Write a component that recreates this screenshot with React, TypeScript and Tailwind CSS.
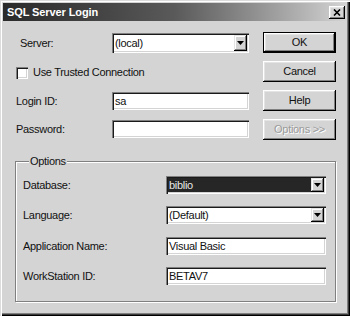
const raised =
  "shadow-[inset_-1px_-1px_0_#000000,inset_1px_1px_0_#ffffff,inset_-2px_-2px_0_#808080,inset_2px_2px_0_#e4e4e4]";
const sunken =
  "shadow-[inset_1px_1px_0_#808080,inset_2px_2px_0_#1a1a1a,inset_-1px_-1px_0_#ffffff,inset_-2px_-2px_0_#d4d4d4]";

function DropArrow() {
  return (
    <div
      className={`w-[13px] h-full bg-[#d4d4d4] flex items-center justify-center shadow-[inset_-1px_-1px_0_#000000,inset_1px_1px_0_#e4e4e4,inset_-2px_-2px_0_#808080,inset_2px_2px_0_#ffffff]`}
    >
      <svg width="7" height="4" viewBox="0 0 7 4">
        <polygon points="0,0 7,0 3.5,4" fill="#000" />
      </svg>
    </div>
  );
}

function Combo({
  value,
  w,
  h,
  dark,
}: {
  value: string;
  w: string;
  h: string;
  dark?: boolean;
}) {
  return (
    <div
      className={`${w} ${h} ${sunken} ${dark ? "bg-[#262626] text-[#e6e6e6]" : "bg-white text-[#111]"} flex items-stretch p-[2px]`}
    >
      <div className="flex-1 flex items-center pl-[1px] leading-none">{value}</div>
      <DropArrow />
    </div>
  );
}

function Edit({ value, w, h }: { value: string; w: string; h: string }) {
  return (
    <div className={`${w} ${h} ${sunken} bg-white flex items-center pl-[3px] leading-none text-[#111]`}>
      {value}
    </div>
  );
}

function Button({
  label,
  isDefault,
  disabled,
}: {
  label: string;
  isDefault?: boolean;
  disabled?: boolean;
}) {
  if (isDefault) {
    return (
      <div className="w-[73px] h-[21px] border border-black">
        <div className={`w-full h-full ${raised} flex items-center justify-center text-[#111]`}>
          {label}
        </div>
      </div>
    );
  }
  return (
    <div
      className={`w-[73px] h-[21px] ${raised} flex items-center justify-center ${
        disabled ? "text-[#9a9a9a] [text-shadow:1px_1px_0_#ffffff]" : "text-[#111]"
      }`}
    >
      {label}
    </div>
  );
}

export default function App() {
  return (
    <div className="w-[350px] h-[316px] bg-[#d4d4d4] p-[3px] font-['Liberation_Sans',Arial,sans-serif] text-[11px] tracking-[-0.3px] shadow-[inset_1px_1px_0_#dcdcdc,inset_2px_2px_0_#ffffff,inset_-1px_-1px_0_#000000,inset_-2px_-2px_0_#3a3a3a,inset_-3px_-3px_0_#808080]">
      {/* title bar */}
      <div className="h-[18px] bg-linear-to-r from-[#2a2a2a] via-[#5a5a5a] to-[#d4d4d4] flex items-center justify-between pl-[4px] pr-[2px]">
        <span className="text-white font-bold text-[11px] tracking-[-0.1px]">SQL Server Login</span>
        <div className={`w-[16px] h-[13px] bg-[#d4d4d4] ${raised} flex items-center justify-center`}>
          <svg width="8" height="7" viewBox="0 0 8 7">
            <path d="M1 0.5 L7 6.5 M7 0.5 L1 6.5" stroke="#000" strokeWidth="1.6" />
          </svg>
        </div>
      </div>

      {/* top section */}
      <div className="flex pt-[11px] pl-[13px]">
        <div className="w-[233px] flex flex-col">
          <div className="flex items-center mt-[1px] h-[20px]">
            <span className="w-[96px] pl-[4px] text-[#111]">Server:</span>
            <Combo value="(local)" w="w-[137px]" h="h-[20px]" />
          </div>
          <div className="flex items-center mt-[13px] h-[13px]">
            <div className={`w-[12px] h-[12px] bg-white ${sunken}`} />
            <span className="ml-[5px] text-[#111]">Use Trusted Connection</span>
          </div>
          <div className="flex items-center mt-[13px] h-[18px]">
            <span className="w-[96px] text-[#111]">Login ID:</span>
            <Edit value="sa" w="w-[137px]" h="h-[18px]" />
          </div>
          <div className="flex items-center mt-[10px] h-[18px]">
            <span className="w-[96px] text-[#111]">Password:</span>
            <Edit value="" w="w-[137px]" h="h-[18px]" />
          </div>
        </div>
        <div className="ml-[14px] flex flex-col gap-[8px]">
          <Button label="OK" isDefault />
          <Button label="Cancel" />
          <Button label="Help" />
          <Button label="Options >>" disabled />
        </div>
      </div>

      {/* options group */}
      <fieldset className="mt-[15px] ml-[12px] w-[321px] border border-[#808080] shadow-[inset_1px_1px_0_#ffffff,1px_1px_0_#ffffff] pt-[8px] pb-[16px] pl-[7px]">
        <legend className="ml-[6px] px-[1px] leading-[13px] bg-[#d4d4d4] text-[#111]">Options</legend>
        <div className="flex items-center h-[18px]">
          <span className="w-[143px] text-[#111]">Database:</span>
          <Combo value="biblio" w="w-[160px]" h="h-[18px]" dark />
        </div>
        <div className="flex items-center h-[18px] mt-[12px]">
          <span className="w-[143px] text-[#111]">Language:</span>
          <Combo value="(Default)" w="w-[160px]" h="h-[18px]" />
        </div>
        <div className="flex items-center h-[18px] mt-[13px]">
          <span className="w-[143px] text-[#111]">Application Name:</span>
          <Edit value="Visual Basic" w="w-[160px]" h="h-[18px]" />
        </div>
        <div className="flex items-center h-[18px] mt-[12px]">
          <span className="w-[143px] text-[#111]">WorkStation ID:</span>
          <Edit value="BETAV7" w="w-[160px]" h="h-[18px]" />
        </div>
      </fieldset>
    </div>
  );
}
